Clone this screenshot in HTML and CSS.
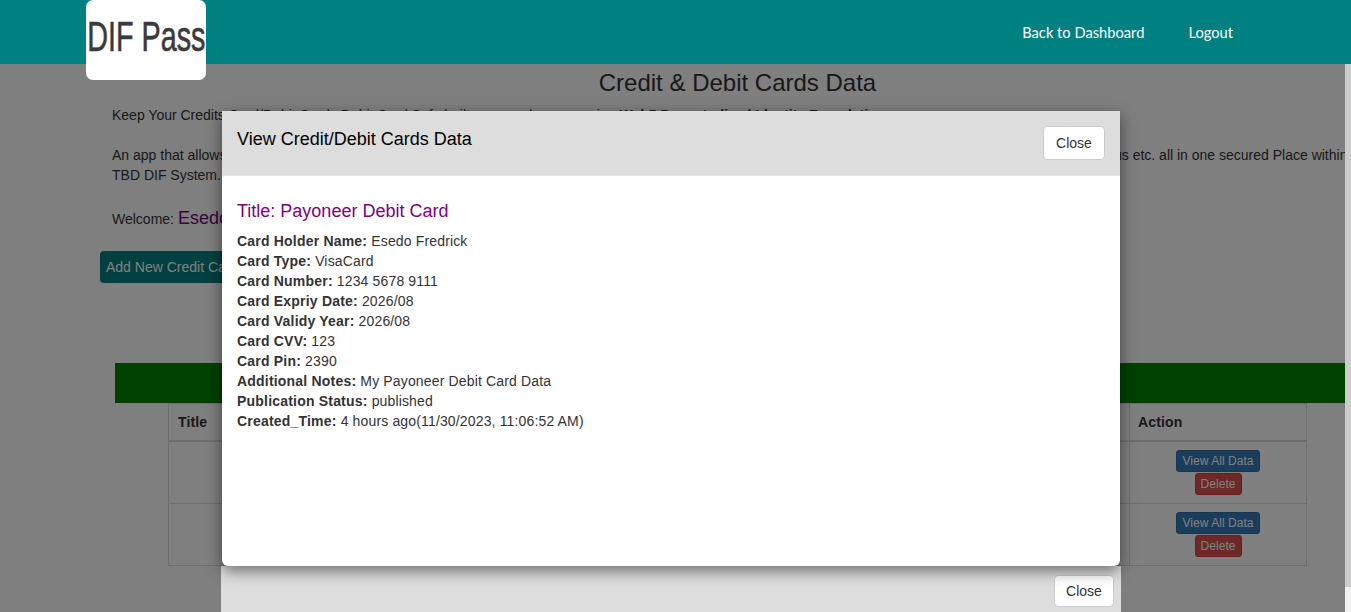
FILE: index.html
```html
<!DOCTYPE html>
<html lang="en">
<head>
    <meta charset="UTF-8">
    <meta name="viewport" content="width=device-width, initial-scale=1.0">
    <title>DIF Pass - Credit &amp; Debit Cards Data</title>
    <link rel="stylesheet" href="styles.css">
</head>
<body>
    <header class="navbar">
        <a class="logo" href="#"><span class="logo-text">DIF Pass</span></a>
        <nav class="nav-links">
            <a href="#">Back to Dashboard</a>
            <a href="#">Logout</a>
        </nav>
    </header>

    <main class="page">
        <h1 class="page-title">Credit &amp; Debit Cards Data</h1>
        <p class="intro">Keep Your Credits Card/Debit Cards Debit Card Safe built upon and secure using <b>Web5 Decentralized Identity Foundation</b></p>
        <p class="intro">An app that allows users to store their Credit Cards, Debit Cards, Card Numbers, Card Pins, Expiry Dates, Validity Years, CVVs, Additional Notes, Publication Status etc. all in one secured Place within<br>TBD DIF System.</p>
        <p class="welcome">Welcome: <span class="welcome-name">Esedo Fredrick</span></p>
        <button class="add-btn">Add New Credit Card Data</button>

        <h2 class="table-banner">Your Credit &amp; Debit Cards</h2>
        <table class="cards-table">
            <thead>
                <tr>
                    <th class="col-title">Title</th>
                    <th>Card Holder Name</th>
                    <th>Card Type</th>
                    <th>Publication Status</th>
                    <th class="col-action">Action</th>
                </tr>
            </thead>
            <tbody>
                <tr>
                    <td>Payoneer Debit Card</td>
                    <td>Esedo Fredrick</td>
                    <td>VisaCard</td>
                    <td>published</td>
                    <td class="actions">
                        <button class="btn-xs btn-view">View All Data</button>
                        <button class="btn-xs btn-delete">Delete</button>
                    </td>
                </tr>
                <tr>
                    <td>Payoneer Debit Card</td>
                    <td>Esedo Fredrick</td>
                    <td>VisaCard</td>
                    <td>published</td>
                    <td class="actions">
                        <button class="btn-xs btn-view">View All Data</button>
                        <button class="btn-xs btn-delete">Delete</button>
                    </td>
                </tr>
            </tbody>
        </table>
    </main>

    <div class="scrollbar"><div class="scrollbar-thumb"></div></div>
    <div class="backdrop"></div>

    <div class="dialog">
        <div class="dialog-panel">
            <div class="dialog-header">
                <h4 class="dialog-title">View Credit/Debit Cards Data</h4>
                <button class="btn-close">Close</button>
            </div>
            <div class="dialog-body">
                <h3 class="card-title">Title: Payoneer Debit Card</h3>
                <div><b>Card Holder Name:</b> Esedo Fredrick</div>
                <div><b>Card Type:</b> VisaCard</div>
                <div><b>Card Number:</b> 1234 5678 9111</div>
                <div><b>Card Expriy Date:</b> 2026/08</div>
                <div><b>Card Validy Year:</b> 2026/08</div>
                <div><b>Card CVV:</b> 123</div>
                <div><b>Card Pin:</b> 2390</div>
                <div><b>Additional Notes:</b> My Payoneer Debit Card Data</div>
                <div><b>Publication Status:</b> published</div>
                <div><b>Created_Time:</b> 4 hours ago(11/30/2023, 11:06:52 AM)</div>
            </div>
        </div>
        <div class="dialog-footer">
            <button class="btn-close">Close</button>
        </div>
    </div>
</body>
</html>
```

FILE: styles.css
```css
html, body {
    height: 612px;
    overflow: hidden;
}
body {
    position: relative;
    margin: 0;
    background-color: #fff;
    color: #333;
    font-family: "Liberation Sans", Arial, sans-serif;
    font-size: 14px;
    line-height: 20px;
}
button {
    font-family: inherit;
    cursor: pointer;
}

/* top bar sits above the backdrop */
.navbar {
    position: relative;
    z-index: 3;
    display: flex;
    justify-content: space-between;
    height: 64px;
    padding: 0 118px 0 86px;
    background-color: #008080;
}
.logo {
    display: flex;
    align-items: center;
    justify-content: center;
    width: 120px;
    height: 80px;
    border-radius: 7px;
    background-color: #fff;
    color: #3a3a3a;
    text-decoration: none;
    overflow: hidden;
}
.logo-text {
    flex: none;
    padding-bottom: 7px;
    font-size: 42px;
    line-height: 50px;
    white-space: nowrap;
    transform: scaleX(0.685);
    -webkit-text-stroke: 0.6px #3a3a3a;
}
.nav-links {
    display: flex;
    align-items: center;
    gap: 44px;
}
.nav-links a {
    color: #fff;
    font-family: "Lato", sans-serif;
    font-size: 14.7px;
    text-decoration: none;
}

/* page behind the dialog */
.page {
    padding-right: 6px;
}
.page-title {
    margin: 0 0 0 130px;
    padding-top: 3px;
    font-size: 24px;
    font-weight: 400;
    line-height: 32px;
    text-align: center;
}
.intro {
    margin: 6px 0 0 112px;
    white-space: nowrap;
}
.intro + .intro {
    margin-top: 20px;
}
.welcome {
    margin: 19px 0 0 112px;
    height: 28px;
    line-height: 28px;
}
.welcome-name {
    color: #800080;
    font-size: 18px;
}
.add-btn {
    display: block;
    margin: 19px 0 0 100px;
    width: 180px;
    height: 32px;
    padding: 0 6px;
    border: 0;
    border-radius: 4px;
    background-color: #008080;
    color: #fff;
    font-size: 14px;
    text-align: left;
    white-space: nowrap;
}
.table-banner {
    margin: 80px 0 0 115px;
    height: 40px;
    background-color: #008000;
    color: #fff;
    font-size: 18px;
    font-weight: 400;
    line-height: 40px;
    text-align: center;
}
.cards-table {
    width: 1139px;
    margin-left: 168px;
    border-collapse: collapse;
    table-layout: fixed;
}
.cards-table th,
.cards-table td {
    padding: 8px;
    border: 1px solid #ddd;
    text-align: center;
    vertical-align: middle;
}
.cards-table th {
    height: 20px;
    border-bottom-width: 2px;
    letter-spacing: 0.15px;
    text-align: left;
}
.cards-table .col-title {
    width: 240px;
    padding-left: 9px;
}
.col-action {
    width: 160px;
}
.btn-xs {
    display: block;
    margin: 0 auto 1px;
    height: 22px;
    padding: 0 5px;
    border: 1px solid transparent;
    border-radius: 3px;
    color: #fff;
    font-size: 12px;
    letter-spacing: 0.05px;
    line-height: 18px;
}
.btn-view {
    background-color: #337ab7;
    border-color: #2e6da4;
}
.btn-delete {
    background-color: #d9534f;
    border-color: #d43f3a;
    margin-bottom: 0;
}

/* fake window scrollbar */
.scrollbar {
    position: absolute;
    top: 64px;
    right: 0;
    bottom: 0;
    width: 6px;
    background-color: #f1f1f1;
}
.scrollbar-thumb {
    height: 523px;
    background-color: #ccc;
}

.backdrop {
    position: absolute;
    z-index: 1;
    top: 0;
    right: 6px;
    bottom: 0;
    left: 0;
    background-color: rgba(0, 0, 0, 0.5);
}

.dialog {
    position: absolute;
    z-index: 2;
    top: 111px;
    left: 221px;
    width: 900px;
}
.dialog-panel {
    position: relative;
    margin: 0 1px;
    height: 455px;
    border-radius: 0 0 6px 6px;
    background-color: #fff;
    box-shadow: 0 5px 15px rgba(0, 0, 0, 0.5);
}
.dialog-header {
    display: flex;
    justify-content: space-between;
    align-items: flex-start;
    height: 65px;
    padding: 15px 15px 0;
    box-sizing: border-box;
    border-bottom: 1px solid #e5e5e5;
    background-color: #ddd;
}
.dialog-title {
    margin: 0;
    color: #000;
    font-size: 18px;
    font-weight: 400;
    line-height: 26px;
}
.btn-close {
    width: 62px;
    height: 34px;
    padding: 0;
    border: 1px solid #ccc;
    border-radius: 4px;
    background-color: #fff;
    color: #333;
    font-size: 14px;
}
.dialog-body {
    padding: 25px 15px 0;
    letter-spacing: 0.15px;
}
.dialog-body b {
    letter-spacing: 0.2px;
}
.card-title {
    margin: 0 0 10px;
    color: #800080;
    font-size: 18px;
    font-weight: 400;
    letter-spacing: 0;
    line-height: 20px;
}
.dialog-footer {
    display: flex;
    justify-content: flex-end;
    height: 46px;
    padding: 9px 7px 0 0;
    box-sizing: border-box;
    background-color: #ddd;
}
.dialog-footer .btn-close {
    width: 60px;
    height: 32px;
}
```
